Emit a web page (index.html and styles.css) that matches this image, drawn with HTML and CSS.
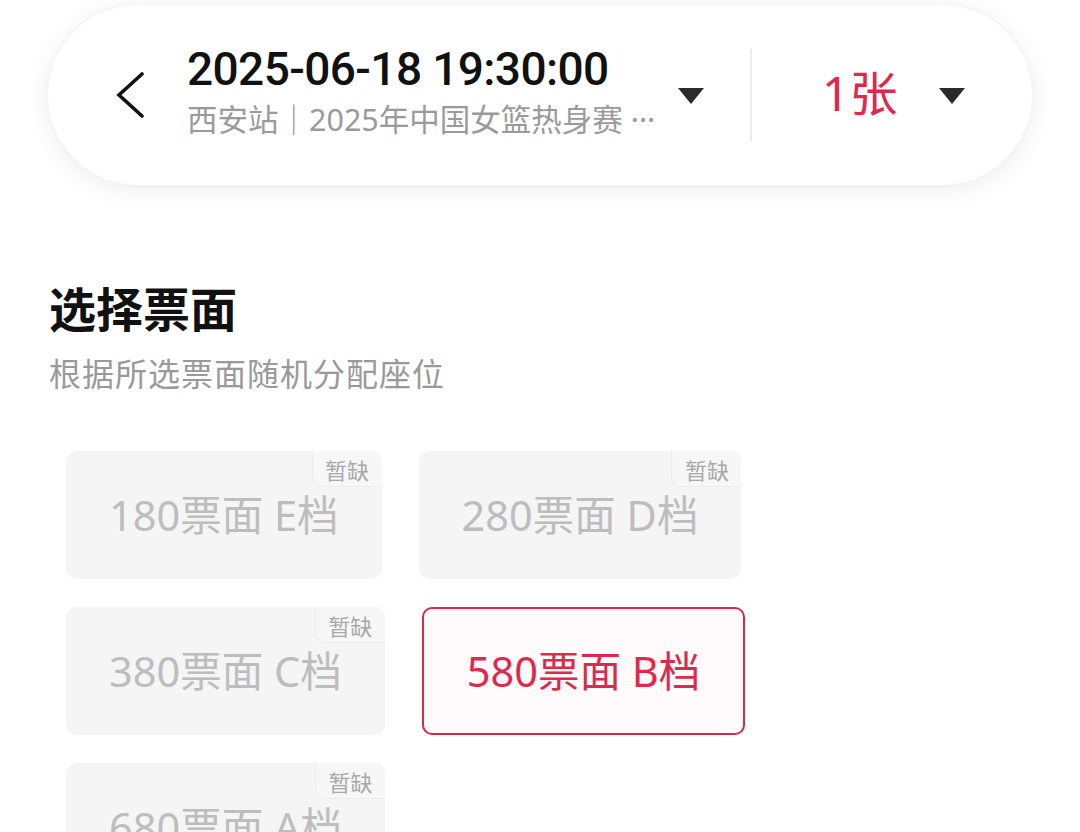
FILE: index.html
```html
<!DOCTYPE html>
<html lang="zh-CN">
<head>
<meta charset="utf-8">
<title>选择票面</title>
<link rel="stylesheet" href="styles.css">
</head>
<body>
<div class="page">
  <header class="topbar">
    <div class="pill">
      <button class="back" aria-label="返回">
        <svg width="30" height="46" viewBox="0 0 30 46"><path d="M27 2 L4 23 L27 44" fill="none" stroke="#111" stroke-width="3.6" stroke-linejoin="miter" stroke-linecap="round"/></svg>
      </button>
      <div class="session">
        <div class="date">2025-06-18 19:30:00</div>
        <div class="venue">西安站｜2025年中国女篮热身赛 ···</div>
      </div>
      <span class="caret"></span>
      <span class="divider"></span>
      <div class="qty">1张</div>
      <span class="caret caret-right"></span>
    </div>
  </header>

  <section class="picker">
    <h1 class="title">选择票面</h1>
    <p class="hint">根据所选票面随机分配座位</p>
    <div class="chips">
      <div class="chip disabled"><span class="label">180票面 E档</span><span class="badge">暂缺</span></div>
      <div class="chip disabled"><span class="label">280票面 D档</span><span class="badge">暂缺</span></div>
      <div class="chip disabled"><span class="label">380票面 C档</span><span class="badge">暂缺</span></div>
      <div class="chip selected"><span class="label">580票面 B档</span></div>
      <div class="chip disabled"><span class="label">680票面 A档</span><span class="badge">暂缺</span></div>
    </div>
  </section>
</div>
</body>
</html>
```

FILE: styles.css
```css
* { box-sizing: border-box; }
html, body {
  margin: 0;
  padding: 0;
  background: #ffffff;
  font-family: "Noto Sans", "Noto Sans CJK SC", sans-serif;
  color: #111;
}
.page {
  width: 1080px;
  height: 832px;
  overflow: hidden;
}
.topbar {
  padding: 5px 48px 0;
}
.pill {
  height: 180px;
  border-radius: 90px;
  background: #fff;
  box-shadow: 0 4px 28px rgba(0,0,0,0.07), 0 0 6px rgba(0,0,0,0.03);
  display: flex;
  align-items: center;
  padding-left: 67px;
}
.back {
  border: 0;
  background: none;
  padding: 0;
  width: 30px;
  height: 46px;
  display: flex;
  margin-right: 42px;
}
.session {
  display: flex;
  flex-direction: column;
  width: 480px;
  margin-top: -10px;
}
.date {
  font-family: "Roboto", "Noto Sans", sans-serif;
  font-weight: 500;
  font-size: 46px;
  line-height: 56px;
  letter-spacing: -0.6px;
  color: #111;
}
.venue {
  font-size: 30.5px;
  line-height: 40px;
  color: #9a9a9a;
  margin-top: 2px;
  white-space: nowrap;
}
.caret {
  width: 0;
  height: 0;
  border-left: 13px solid transparent;
  border-right: 13px solid transparent;
  border-top: 16px solid #2b2b2b;
  margin-left: 11px;
  margin-top: 2px;
}
.divider {
  width: 2px;
  height: 92px;
  background: #ececec;
  margin-left: 46px;
}
.qty {
  font-size: 48px;
  line-height: 56px;
  color: #e0284d;
  margin-left: 70px;
  letter-spacing: 0;
  margin-top: -4px;
}
.caret-right {
  margin-left: 42px;
}
.picker {
  padding: 0 49px;
  margin-top: 96px;
}
.title {
  margin: 0;
  font-size: 47px;
  line-height: 60px;
  font-weight: 700;
  color: #111;
  margin-top: -2px;
}
.hint {
  margin: 15px 0 0;
  font-size: 32px;
  line-height: 40px;
  color: #999;
  letter-spacing: 1px;
}
.chips {
  display: flex;
  flex-wrap: wrap;
  column-gap: 37px;
  row-gap: 28px;
  margin-top: 57px;
  padding-left: 17px;
  width: 760px;
}
.chip {
  position: relative;
  height: 128px;
  padding: 0 43px;
  border-radius: 10px;
  display: flex;
  align-items: center;
  justify-content: center;
  background: #f5f5f5;
}
.chip .label {
  font-size: 41.5px;
  line-height: 48px;
  white-space: nowrap;
}
.chip.disabled .label {
  color: #bdbdbd;
}
.chip.selected {
  background: #fffbfc;
  border: 2px solid #d42b4c;
  padding: 0 43px;
}
.chip.selected .label {
  color: #dc2a4c;
}
.badge {
  position: absolute;
  top: 0;
  right: 0;
  width: 70px;
  height: 36px;
  display: flex;
  align-items: center;
  justify-content: center;
  font-size: 22px;
  color: #a8a8a8;
  background: #f7f7f7;
  border-left: 1px solid #ececec;
  border-bottom: 1px solid #ececec;
  border-radius: 0 10px 0 10px;
}
```
